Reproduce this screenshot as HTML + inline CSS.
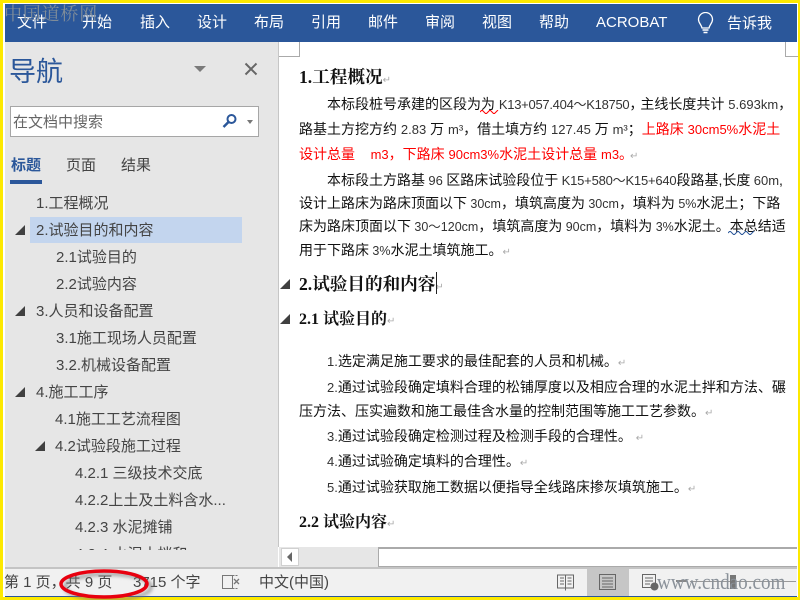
<!DOCTYPE html>
<html><head><meta charset="utf-8"><style>
html,body{margin:0;padding:0;background:#fff}
#p{position:relative;width:800px;height:600px;overflow:hidden;background:#fff;font-family:"Liberation Sans","Noto Sans CJK SC",sans-serif}
.a{position:absolute;white-space:nowrap}
.r{position:absolute}
.m{color:#fff;font-size:15px;line-height:20px;top:13px}
.n{color:#444;font-size:15px;line-height:20px}
.b{color:#111;font-size:14px;line-height:20px;font-family:"Liberation Sans","WenQuanYi Zen Hei",sans-serif}
.h{color:#111;font-weight:bold;font-family:"Liberation Serif","Noto Serif CJK SC",serif;line-height:22px}
.red{color:#f00}
.s{color:#444;font-size:15px;line-height:20px;top:573px}
.tri{position:absolute;width:0;height:0;border-left:10px solid transparent;border-bottom:10px solid #404040}
.mk{color:#aaa;font-size:10px;font-weight:normal}
.t{font-size:12.5px;color:#333}
.l{font-size:13px;color:#333}
</style></head><body><div id="p">
<div class="r" style="left:5px;top:4px;width:792px;height:38px;background:#2b579a"></div>
<div class="a m" style="left:17px">文件</div>
<div class="a m" style="left:82px">开始</div>
<div class="a m" style="left:140px">插入</div>
<div class="a m" style="left:197px">设计</div>
<div class="a m" style="left:254px">布局</div>
<div class="a m" style="left:311px">引用</div>
<div class="a m" style="left:368px">邮件</div>
<div class="a m" style="left:425px">审阅</div>
<div class="a m" style="left:482px">视图</div>
<div class="a m" style="left:539px">帮助</div>
<div class="a m" style="left:596px">ACROBAT</div>
<svg class="r" style="left:695px;top:12px" width="22" height="22" viewBox="0 0 22 22"><path d="M7 16 C6 12 3.500 11 3.500 7.500 A7 7 0 0 1 17.500 7.500 C17.500 11 15 12 14 16 Z" fill="none" stroke="#fff" stroke-width="1.300"/><path d="M7.500 18H13.500M8.500 20.500H12.500" stroke="#fff" stroke-width="1.500"/></svg>
<div class="a m" style="left:727px;top:14px">告诉我</div>

<div class="r" style="left:5px;top:42px;width:273px;height:527px;background:#e6e6e6"></div>
<div class="r" style="left:278px;top:42px;width:1px;height:505px;background:#c6c6c6"></div>
<div class="a" style="left:9px;top:54px;font-size:27px;line-height:36px;color:#2b579a">导航</div>
<div class="r" style="left:194px;top:66px;width:0;height:0;border-left:6px solid transparent;border-right:6px solid transparent;border-top:6px solid #7a7a7a"></div>
<svg class="r" style="left:244px;top:62px" width="14" height="14"><path d="M1.500 1.500L12.500 12.500M12.500 1.500L1.500 12.500" stroke="#666" stroke-width="2"/></svg>
<div class="r" style="left:10px;top:106px;width:247px;height:29px;background:#fff;border:1px solid #a6a6a6"></div>
<div class="a" style="left:13px;top:113px;font-size:15px;line-height:20px;color:#666">在文档中搜索</div>
<svg class="r" style="left:222px;top:113px" width="16" height="16"><circle cx="9.500" cy="6" r="4" fill="none" stroke="#2b579a" stroke-width="2"/><path d="M6.500 9L1.500 14" stroke="#2b579a" stroke-width="2.500"/></svg>
<div class="r" style="left:247px;top:120px;width:0;height:0;border-left:3.500px solid transparent;border-right:3.500px solid transparent;border-top:4px solid #777"></div>
<div class="a" style="left:11px;top:156px;font-size:15px;line-height:20px;color:#2b579a;font-weight:bold">标题</div>
<div class="a n" style="left:66px;top:156px">页面</div>
<div class="a n" style="left:121px;top:156px">结果</div>
<div class="r" style="left:10px;top:180px;width:32px;height:4px;background:#2b579a"></div>
<div class="r" style="left:30px;top:217px;width:212px;height:26px;background:#c3d5ee"></div>
<div class="a n" style="left:36px;top:194px">1.工程概况</div>
<div class="a n" style="left:36px;top:221px">2.试验目的和内容</div>
<div class="a n" style="left:56px;top:248px">2.1试验目的</div>
<div class="a n" style="left:56px;top:275px">2.2试验内容</div>
<div class="a n" style="left:36px;top:302px">3.人员和设备配置</div>
<div class="a n" style="left:56px;top:329px">3.1施工现场人员配置</div>
<div class="a n" style="left:56px;top:356px">3.2.机械设备配置</div>
<div class="a n" style="left:36px;top:383px">4.施工工序</div>
<div class="a n" style="left:55px;top:410px">4.1施工工艺流程图</div>
<div class="a n" style="left:55px;top:437px">4.2试验段施工过程</div>
<div class="a n" style="left:75px;top:464px">4.2.1 三级技术交底</div>
<div class="a n" style="left:75px;top:491px">4.2.2上土及土料含水...</div>
<div class="a n" style="left:75px;top:518px">4.2.3 水泥摊铺</div>
<div class="r" style="left:5px;top:543px;width:273px;height:7px;overflow:hidden"><div class="a n" style="left:70px;top:2px">4.2.4 水泥土拌和</div></div>
<div class="tri" style="left:15px;top:225px"></div>
<div class="tri" style="left:15px;top:306px"></div>
<div class="tri" style="left:15px;top:387px"></div>
<div class="tri" style="left:35px;top:441px"></div>

<div class="r" style="left:279px;top:42px;width:20px;height:14px;border-right:1px solid #aaa;border-bottom:1px solid #aaa"></div>
<div class="r" style="left:785px;top:42px;width:12px;height:14px;border-left:1px solid #aaa;border-bottom:1px solid #aaa"></div>

<div class="a h" style="left:299px;top:66px;font-size:17.6px">1.工程概况<span class="mk">↵</span></div>
<div class="a b" style="left:327px;top:94px">本标段桩号承建的区段为为 <span class="l" style="letter-spacing:-.28px">K13+057.404～K18750</span><span style="letter-spacing:-3px">，</span>主线长度共计 <span class="l">5.693km</span>，</div>
<svg class="r" style="left:480px;top:110px" width="20" height="4"><path d="M0 2L2 0L4 2L6 4L8 2L10 0L12 2L14 4L16 2L18 0" fill="none" stroke="#f00" stroke-width="1"/></svg>
<div class="a b" style="left:299px;top:119px">路基土方挖方约 <span class="l">2.83</span> 万 <span class="l">m³</span>，借土填方约 <span class="l">127.45</span> 万 <span class="l">m³</span>；<span class="red">上路床 <span style="font-size:13px">30cm5%</span>水泥土</span></div>
<div class="a b red" style="left:299px;top:144px">设计总量 &nbsp;&nbsp; <span style="font-size:13px">m3</span>，下路床 <span style="font-size:13px">90cm3%</span>水泥土设计总量 <span style="font-size:13px">m3</span><span style="letter-spacing:-3px">。</span><span class="mk">↵</span></div>
<div class="a b" style="left:327px;top:170px;word-spacing:-.5px">本标段土方路基 <span class="l">96</span> 区路床试验段位于 <span class="l" style="letter-spacing:-.2px">K15+580～K15+640</span>段路基,长度 <span class="l">60m</span>,</div>
<div class="a b" style="left:299px;top:193px;word-spacing:-.5px">设计上路床为路床顶面以下 <span class="t">30cm</span>，填筑高度为 <span class="t">30cm</span>，填料为 <span class="t">5%</span>水泥土；下路</div>
<div class="a b" style="left:299px;top:216px;word-spacing:-.5px">床为路床顶面以下 <span class="t">30～120cm</span>，填筑高度为 <span class="t">90cm</span>，填料为 <span class="t">3%</span>水泥土。本总结适</div>
<svg class="r" style="left:728px;top:231px" width="28" height="4"><path d="M0 2L2 0L4 2L6 4L8 2L10 0L12 2L14 4L16 2L18 0L20 2L22 4L24 2L26 0" fill="none" stroke="#2b579a" stroke-width="1"/></svg>
<div class="a b" style="left:299px;top:240px;word-spacing:-.5px">用于下路床 <span class="t">3%</span>水泥土填筑施工。<span class="mk">↵</span></div>
<div class="tri" style="left:280px;top:279px"></div>
<div class="a h" style="left:299px;top:273px;font-size:17.6px">2.试验目的和内容<span class="mk">↵</span></div>
<div class="r" style="left:436px;top:272px;width:1px;height:22px;background:#222"></div>
<div class="tri" style="left:280px;top:314px"></div>
<div class="a h" style="left:299px;top:309px;font-size:16px">2.1 试验目的<span class="mk">↵</span></div>
<div class="a b" style="left:327px;top:351px"><span class="l">1.</span>选定满足施工要求的最佳配套的人员和机械。<span class="mk">↵</span></div>
<div class="a b" style="left:327px;top:377px"><span class="l">2.</span>通过试验段确定填料合理的松铺厚度以及相应合理的水泥土拌和方法、碾</div>
<div class="a b" style="left:299px;top:401px">压方法、压实遍数和施工最佳含水量的控制范围等施工工艺参数。<span class="mk">↵</span></div>
<div class="a b" style="left:327px;top:426px"><span class="l">3.</span>通过试验段确定检测过程及检测手段的合理性。 <span class="mk">↵</span></div>
<div class="a b" style="left:327px;top:451px"><span class="l">4.</span>通过试验确定填料的合理性。<span class="mk">↵</span></div>
<div class="a b" style="left:327px;top:477px"><span class="l">5.</span>通过试验获取施工数据以便指导全线路床掺灰填筑施工。<span class="mk">↵</span></div>
<div class="a h" style="left:299px;top:512px;font-size:16px">2.2 试验内容<span class="mk">↵</span></div>

<div class="r" style="left:279px;top:547px;width:518px;height:20px;background:#e6e6e6"></div>
<div class="r" style="left:281px;top:548px;width:18px;height:18px;background:#fff;border:1px solid #d0d0d0;box-sizing:border-box"></div>
<div class="r" style="left:287px;top:552px;width:0;height:0;border-top:5px solid transparent;border-bottom:5px solid transparent;border-right:5px solid #666"></div>
<div class="r" style="left:378px;top:547px;width:419px;height:20px;background:#fff;border-top:2px solid #aaa;border-left:1px solid #aaa;border-bottom:1px solid #aaa;box-sizing:border-box"></div>

<div class="r" style="left:5px;top:567px;width:792px;height:2px;background:#c4c4c4"></div>
<div class="r" style="left:5px;top:569px;width:792px;height:27px;background:#f1f1f1"></div>
<div class="a s" style="left:4px">第 1 页，共 9 页</div>
<div class="a s" style="left:133px">3715 个字</div>
<svg class="r" style="left:221px;top:574px" width="20" height="16" fill="none" stroke="#777"><path d="M1.500 1.500H11.500V14.500H1.500Z"/><path d="M11.500 1.500H17.500M11.500 14.500H17.500" stroke-dasharray="2 1"/><path d="M13 5L18 10M18 5L13 10" stroke-width="1.300"/></svg>
<div class="a s" style="left:259px">中文(中国)</div>
<svg class="r" style="left:557px;top:573px" width="18" height="18" fill="none" stroke="#666"><path d="M.5 2H8.500V15H.5ZM8.500 2H16.500V15H8.500ZM3 5H7M3 8H7M3 11H7M10.500 5H14.500M10.500 8H14.500M10.500 11H14.500M8.500 15V17.500"/></svg>
<div class="r" style="left:587px;top:569px;width:42px;height:27px;background:#c6c6c6"></div>
<svg class="r" style="left:599px;top:574px" width="18" height="18" fill="none" stroke="#666"><path d="M.5.500H16.500V15.500H.5ZM3 4H14M3 7H14M3 10H14M3 13H14"/></svg>
<svg class="r" style="left:642px;top:574px" width="18" height="18" fill="none" stroke="#666"><path d="M.5.500H13.500V13.500H.5ZM3 4H11M3 7H11M3 10H8"/><circle cx="12.500" cy="12.500" r="4" fill="#666" stroke="none"/></svg>
<div class="r" style="left:676px;top:580px;width:11px;height:2px;background:#888"></div>
<div class="r" style="left:690px;top:581px;width:106px;height:1px;background:#999"></div>
<div class="r" style="left:730px;top:575px;width:6px;height:14px;background:#777"></div>
<div class="a" style="left:657px;top:568px;font:22px/28px 'Liberation Serif',serif;color:#8a9199;transform:scaleX(.87);transform-origin:0 0">www.cndao.com</div>
<div class="r" style="left:5px;top:596px;width:792px;height:1px;background:#2b579a"></div>

<div class="r" style="left:0;top:0;width:800px;height:3px;background:#fde900"></div>
<div class="r" style="left:0;top:0;width:3px;height:600px;background:#fde900"></div>
<div class="r" style="left:798px;top:0;width:2px;height:600px;background:#fde900"></div>
<div class="r" style="left:0;top:597px;width:800px;height:3px;background:#fde900"></div>
<div class="a" style="left:4px;top:0;font:18px/28px 'Liberation Serif','Noto Serif CJK SC',serif;color:#7f8c99;letter-spacing:.8px">中国道桥网</div>
<svg class="r" style="left:50px;top:560px" width="115" height="40"><defs><filter id="f" x="-20%" y="-40%" width="140%" height="180%"><feGaussianBlur stdDeviation="1.500"/></filter></defs><ellipse cx="58" cy="27" rx="43" ry="13" fill="none" stroke="#777" stroke-width="4" opacity=".55" filter="url(#f)"/><ellipse cx="54" cy="24" rx="43" ry="13" fill="none" stroke="#e8000f" stroke-width="3.500"/></svg>
</div></body></html>
